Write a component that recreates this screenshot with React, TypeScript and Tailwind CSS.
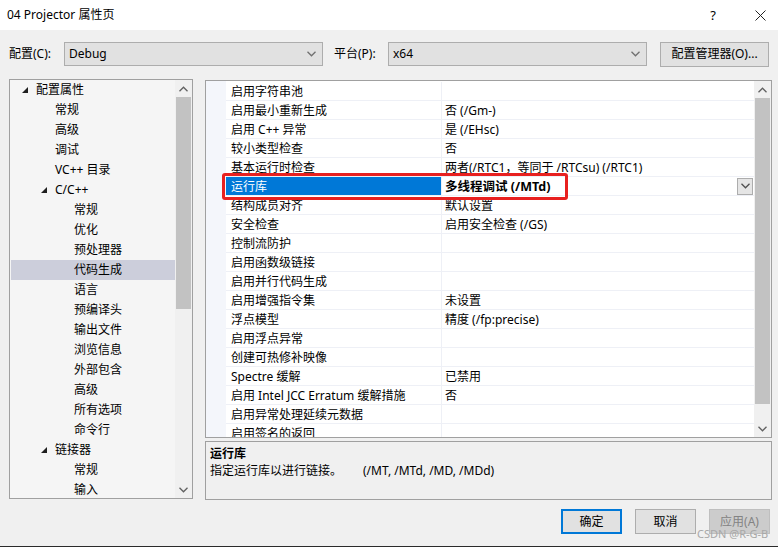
import React from "react";

const font = "font-['Segoe_UI','Noto_Sans','Noto_Sans_CJK_SC',sans-serif]";

type TreeItem = { label: string; level: 0 | 1 | 2; open?: boolean; selected?: boolean };

const tree: TreeItem[] = [
  { label: "配置属性", level: 0, open: true },
  { label: "常规", level: 1 },
  { label: "高级", level: 1 },
  { label: "调试", level: 1 },
  { label: "VC++ 目录", level: 1 },
  { label: "C/C++", level: 1, open: true },
  { label: "常规", level: 2 },
  { label: "优化", level: 2 },
  { label: "预处理器", level: 2 },
  { label: "代码生成", level: 2, selected: true },
  { label: "语言", level: 2 },
  { label: "预编译头", level: 2 },
  { label: "输出文件", level: 2 },
  { label: "浏览信息", level: 2 },
  { label: "外部包含", level: 2 },
  { label: "高级", level: 2 },
  { label: "所有选项", level: 2 },
  { label: "命令行", level: 2 },
  { label: "链接器", level: 1, open: true },
  { label: "常规", level: 2 },
  { label: "输入", level: 2 },
];

const props: [string, string][] = [
  ["启用字符串池", ""],
  ["启用最小重新生成", "否 (/Gm-)"],
  ["启用 C++ 异常", "是 (/EHsc)"],
  ["较小类型检查", "否"],
  ["基本运行时检查", "两者(/RTC1，等同于 /RTCsu) (/RTC1)"],
  ["运行库", "多线程调试 (/MTd)"],
  ["结构成员对齐", "默认设置"],
  ["安全检查", "启用安全检查 (/GS)"],
  ["控制流防护", ""],
  ["启用函数级链接", ""],
  ["启用并行代码生成", ""],
  ["启用增强指令集", "未设置"],
  ["浮点模型", "精度 (/fp:precise)"],
  ["启用浮点异常", ""],
  ["创建可热修补映像", ""],
  ["Spectre 缓解", "已禁用"],
  ["启用 Intel JCC Erratum 缓解措施", "否"],
  ["启用异常处理延续元数据", ""],
  ["启用签名的返回", ""],
];

function Chevron({ up = false, color = "#606060" }: { up?: boolean; color?: string }) {
  return (
    <svg width="9" height="6" viewBox="0 0 9 6" className={up ? "rotate-180" : ""}>
      <path d="M0.5 0.8 L4.5 4.8 L8.5 0.8" fill="none" stroke={color} strokeWidth="1.3" />
    </svg>
  );
}

function Expander() {
  return (
    <svg width="6" height="6" viewBox="0 0 6 6">
      <polygon points="6,0 6,6 0,6" fill="#1e1e1e" />
    </svg>
  );
}

function Combo({ value }: { value: string }) {
  return (
    <div className="w-[259px] h-[24px] border border-[#adadad] bg-[#e1e1e1] flex items-center justify-between pl-[4px] pr-[6px]">
      <span>{value}</span>
      <Chevron color="#707070" />
    </div>
  );
}

function ScrollBar({ thumbTop, thumbHeight }: { thumbTop: number; thumbHeight: number }) {
  return (
    <div className="w-[17px] h-full bg-[#f0f0f0] flex flex-col items-center relative">
      <div className="h-[17px] flex items-center justify-center">
        <Chevron up color="#606060" />
      </div>
      <div
        className="absolute left-[1px] right-[1px] bg-[#c2c2c2]"
        style={{ top: thumbTop, height: thumbHeight }}
      />
      <div className="mt-auto h-[17px] flex items-center justify-center">
        <Chevron color="#606060" />
      </div>
    </div>
  );
}

export default function App() {
  return (
    <div className={`w-[778px] h-[547px] bg-[#f0f0f0] text-[12px] leading-[16px] text-[#000] flex flex-col relative overflow-hidden ${font}`}>
      {/* title bar */}
      <div className="h-[30px] bg-white flex items-center pl-[7px] pr-[12px] shrink-0">
        <span className="text-[12px]">04 Projector 属性页</span>
        <span className="ml-auto mr-[39px] text-[13px]">?</span>
        <svg width="11" height="11" viewBox="0 0 11 11">
          <path d="M0.5 0.5 L10.5 10.5 M10.5 0.5 L0.5 10.5" stroke="#222" strokeWidth="1" />
        </svg>
      </div>

      {/* configuration / platform row */}
      <div className="flex items-center mt-[11px] h-[26px] pl-[9px] shrink-0">
        <span className="w-[55px]">配置(C):</span>
        <Combo value="Debug" />
        <span className="ml-[11px] w-[54px]">平台(P):</span>
        <Combo value="x64" />
        <button className="ml-[13px] w-[109px] h-[25px] border border-[#adadad] bg-[#e1e1e1] text-[12px]">
          配置管理器(O)...
        </button>
      </div>

      {/* main area */}
      <div className="flex mt-[12px] pl-[9px] h-[421px] shrink-0">
        {/* tree */}
        <div className="w-[184px] h-[420px] border border-[#a0a0a0] bg-[#f5f5f5] flex overflow-hidden">
          <div className="flex-1 pl-[1px] overflow-hidden">
            {tree.map((t, i) => (
              <div
                key={i}
                className={`h-[20px] flex items-center ${t.selected ? "bg-[#cccedb]" : ""}`}
              >
                <div
                  className={`flex items-center ${
                    t.level === 0 ? "pl-[11px]" : t.level === 1 ? "pl-[30px]" : "pl-[49px]"
                  }`}
                >
                  <span className="w-[14px] flex items-center">{t.open ? <Expander /> : null}</span>
                  <span className="whitespace-nowrap">{t.label}</span>
                </div>
              </div>
            ))}
          </div>
          <ScrollBar thumbTop={17} thumbHeight={212} />
        </div>

        {/* property grid + description */}
        <div className="ml-[12px] w-[567px] flex flex-col">
          <div className="h-[358px] mt-[1px] border border-[#a0a0a0] bg-white flex overflow-hidden relative">
            <div className="w-[20px] bg-[#f4f6fb] shrink-0" />
            <div className="flex-1 overflow-hidden pt-[1px]">
              {props.map(([name, value], i) => {
                const sel = name === "运行库";
                return (
                  <div key={i} className="h-[19px] flex border-b border-[#eef0f6]">
                    <div
                      className={`w-[215px] pl-[5px] pt-[2px] flex items-center whitespace-nowrap shrink-0 ${
                        sel ? "bg-[#0078d7] text-white" : ""
                      }`}
                    >
                      {name}
                    </div>
                    <div className="w-[1px] bg-[#eef0f6] shrink-0" />
                    <div
                      className={`flex-1 pl-[3px] flex items-center whitespace-nowrap ${
                        sel ? "font-bold text-[12.5px]" : "pt-[2px]"
                      }`}
                    >
                      <span className={sel ? "pt-[2px]" : ""}>{value}</span>
                      {sel && (
                        <div className="ml-auto mr-[1px] w-[16px] h-[17px] border border-[#adadad] bg-[#e5e5e5] flex items-center justify-center">
                          <Chevron color="#505050" />
                        </div>
                      )}
                    </div>
                  </div>
                );
              })}
            </div>
            <ScrollBar thumbTop={17} thumbHeight={306} />
          </div>

          <div className="mt-[3px] h-[59px] border border-[#a0a0a0] bg-[#f0f0f0] px-[4px] pt-[3px]">
            <div className="font-bold leading-[17px]">运行库</div>
            <div className="leading-[17px] whitespace-nowrap">
              指定运行库以进行链接。<span className="ml-[21px]">(/MT, /MTd, /MD, /MDd)</span>
            </div>
          </div>
        </div>
      </div>

      {/* buttons */}
      <div className="flex mt-[9px] pl-[561px] gap-[13px] shrink-0">
        <button className="w-[61px] h-[25px] border-2 border-[#0078d7] bg-[#e1e1e1]">确定</button>
        <button className="w-[61px] h-[25px] border border-[#adadad] bg-[#e1e1e1]">取消</button>
        <button className="w-[61px] h-[25px] border border-[#bfbfbf] bg-[#cccccc] text-[#838383]">应用(A)</button>
      </div>

      <div className="mt-auto h-[1px] bg-[#2b2b2b]" />

      {/* highlight around the runtime library row */}
      <div className="absolute left-[222px] top-[173px] w-[346px] h-[27px] border-[3px] border-[#e8201f] rounded-[3px]" />

      {/* watermark */}
      <span className="absolute left-[697px] top-[526px] text-[11px] text-[#a8a8a8]">CSDN @R-G-B</span>
    </div>
  );
}
